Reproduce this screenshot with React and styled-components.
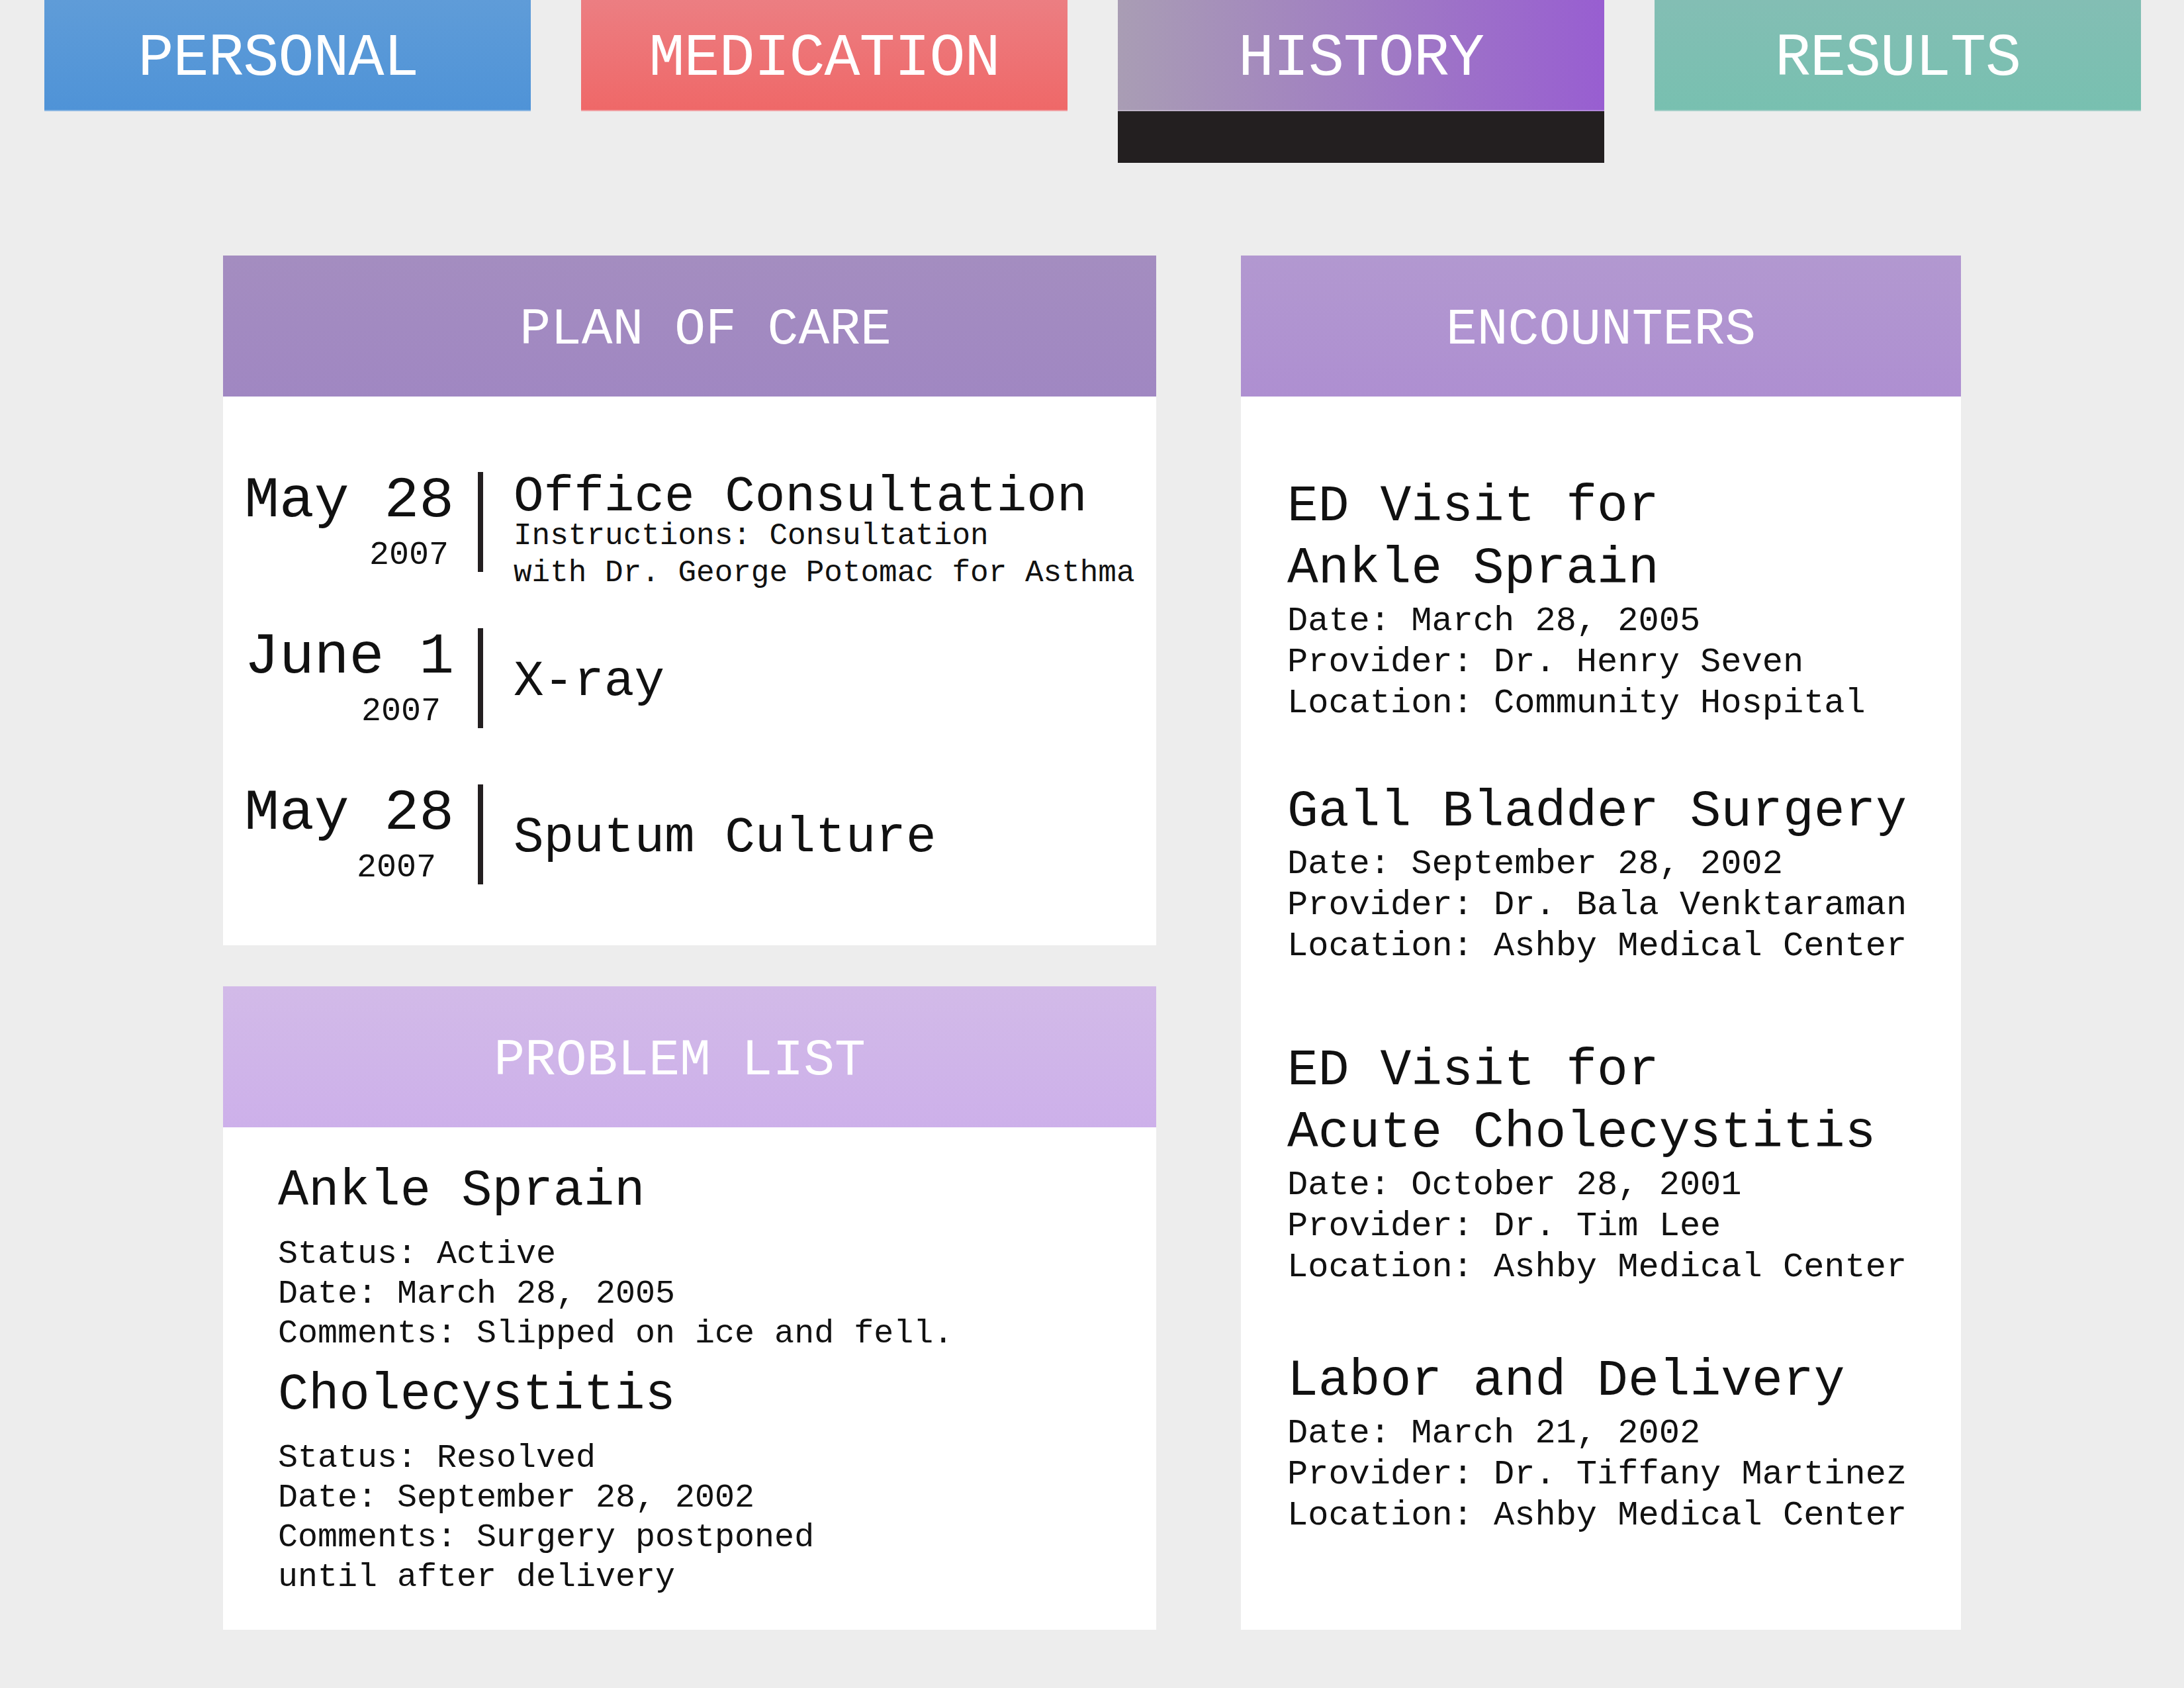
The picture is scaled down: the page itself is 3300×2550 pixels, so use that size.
import React from "react";
import styled, { createGlobalStyle, css } from "styled-components";

const tabs = [
  { name: "PERSONAL", tone: "personal", nudge: -14 },
  { name: "MEDICATION", tone: "medication", nudge: 0 },
  { name: "HISTORY", tone: "history", nudge: 0, active: true },
  { name: "RESULTS", tone: "results", nudge: 0 },
];

const planItems = [
  {
    day: "May 28",
    year: "2007",
    yearPad: 8,
    title: "Office Consultation",
    notes: ["Instructions: Consultation", "with Dr. George Potomac for Asthma"],
  },
  { day: "June 1", year: "2007", yearPad: 20, title: "X-ray" },
  { day: "May 28", year: "2007", yearPad: 27, title: "Sputum Culture" },
];

const problems = [
  {
    name: "Ankle Sprain",
    lines: ["Status: Active", "Date: March 28, 2005", "Comments: Slipped on ice and fell."],
  },
  {
    name: "Cholecystitis",
    lines: [
      "Status: Resolved",
      "Date: September 28, 2002",
      "Comments: Surgery postponed",
      "until after delivery",
    ],
  },
];

const encounters = [
  {
    title: ["ED Visit for", "Ankle Sprain"],
    lines: ["Date: March 28, 2005", "Provider: Dr. Henry Seven", "Location: Community Hospital"],
    space: 0,
  },
  {
    title: ["Gall Bladder Surgery"],
    lines: ["Date: September 28, 2002", "Provider: Dr. Bala Venktaraman", "Location: Ashby Medical Center"],
    space: 85,
  },
  {
    title: ["ED Visit for", "Acute Cholecystitis"],
    lines: ["Date: October 28, 2001", "Provider: Dr. Tim Lee", "Location: Ashby Medical Center"],
    space: 109,
  },
  {
    title: ["Labor and Delivery"],
    lines: ["Date: March 21, 2002", "Provider: Dr. Tiffany Martinez", "Location: Ashby Medical Center"],
    space: 93,
  },
];

const tabBackgrounds = {
  personal: "linear-gradient(180deg, #5f9cd8 0%, #4f93d7 100%)",
  medication: "linear-gradient(180deg, #ec7e82 0%, #ef6868 100%)",
  history: "linear-gradient(90deg, #a99db4 0%, #985ed1 100%)",
  results: "linear-gradient(180deg, #83beb4 0%, #78c0b0 100%)",
};

const headerBackgrounds = {
  plan: "linear-gradient(180deg, #a48dc0 0%, #a087c2 100%)",
  problem: "linear-gradient(180deg, #d2bae8 0%, #cdb0ea 100%)",
  encounters: "linear-gradient(180deg, #b298d0 0%, #ae8fd1 100%)",
};

const App = () => {
  return (
    <>
      <GlobalStyle />
      <Page>
        <TabBar>
          {tabs.map((tab) => (
            <TabItem key={tab.name}>
              <Tab $tone={tab.tone} $nudge={tab.nudge}>
                {tab.name}
              </Tab>
              {tab.active && <ActiveMark />}
            </TabItem>
          ))}
        </TabBar>

        <Columns>
          <LeftColumn>
            <Card>
              <CardHeader $tone="plan" $nudge={24}>
                PLAN OF CARE
              </CardHeader>
              <PlanBody>
                {planItems.map((item, i) => (
                  <PlanRow key={i}>
                    <DateCol>
                      <DateMain>{item.day}</DateMain>
                      <DateYear $pad={item.yearPad}>{item.year}</DateYear>
                    </DateCol>
                    <Divider />
                    <PlanContent $top={!!item.notes}>
                      <PlanTitle $tight={!!item.notes}>{item.title}</PlanTitle>
                      {item.notes && (
                        <PlanNotes>
                          {item.notes.map((n) => (
                            <div key={n}>{n}</div>
                          ))}
                        </PlanNotes>
                      )}
                    </PlanContent>
                  </PlanRow>
                ))}
              </PlanBody>
            </Card>

            <Card>
              <CardHeader $tone="problem" $nudge={-15}>
                PROBLEM LIST
              </CardHeader>
              <ProblemBody>
                {problems.map((p, i) => (
                  <Problem key={p.name} $first={i === 0}>
                    <ProblemName>{p.name}</ProblemName>
                    <Details $size={50} $line={60} $gap={19}>
                      {p.lines.map((l) => (
                        <div key={l}>{l}</div>
                      ))}
                    </Details>
                  </Problem>
                ))}
              </ProblemBody>
            </Card>
          </LeftColumn>

          <RightColumn>
            <Card $grow>
              <CardHeader $tone="encounters" $nudge={0}>
                ENCOUNTERS
              </CardHeader>
              <EncounterBody>
                {encounters.map((e, i) => (
                  <Encounter key={i} $space={e.space}>
                    <EncounterTitle>
                      {e.title.map((t) => (
                        <div key={t}>{t}</div>
                      ))}
                    </EncounterTitle>
                    <Details $size={52} $line={62} $gap={2}>
                      {e.lines.map((l) => (
                        <div key={l}>{l}</div>
                      ))}
                    </Details>
                  </Encounter>
                ))}
              </EncounterBody>
            </Card>
          </RightColumn>
        </Columns>
      </Page>
    </>
  );
};

export default App;

const GlobalStyle = createGlobalStyle`
  * {
    box-sizing: border-box;
  }
  body {
    margin: 0;
    background: #ededed;
    font-family: "Liberation Mono", "DejaVu Sans Mono", monospace;
    color: #111111;
  }
`;

const Page = styled.div`
  width: 3300px;
  min-height: 2550px;
  background: #ededed;
`;

const TabBar = styled.nav`
  display: grid;
  grid-template-columns: repeat(4, 735px);
  column-gap: 76px;
  align-items: start;
  padding: 0 65px 0 67px;
`;

const TabItem = styled.div`
  display: flex;
  flex-direction: column;
`;

const Tab = styled.div`
  height: 168px;
  display: flex;
  align-items: center;
  justify-content: center;
  padding-top: 12px;
  color: #ffffff;
  font-size: 90px;
  letter-spacing: -1px;
  background: ${({ $tone }) => tabBackgrounds[$tone]};
  border-bottom: 2px solid rgba(255, 255, 255, 0.25);
  ${({ $nudge }) =>
    $nudge < 0
      ? css`
          padding-right: ${-$nudge * 2}px;
        `
      : css`
          padding-left: ${$nudge * 2}px;
        `}
`;

const ActiveMark = styled.div`
  height: 78px;
  background: #231f20;
`;

const Columns = styled.main`
  display: flex;
  align-items: stretch;
  gap: 128px;
  margin-top: 140px;
  padding: 0 337px;
`;

const LeftColumn = styled.section`
  width: 1410px;
  display: flex;
  flex-direction: column;
  gap: 62px;
`;

const RightColumn = styled.section`
  width: 1088px;
  display: flex;
  flex-direction: column;
`;

const Card = styled.article`
  background: #ffffff;
  display: flex;
  flex-direction: column;
  ${({ $grow }) =>
    $grow &&
    css`
      flex: 1;
    `}
`;

const CardHeader = styled.h2`
  margin: 0;
  height: 213px;
  display: flex;
  align-items: center;
  justify-content: center;
  padding-top: 10px;
  color: #ffffff;
  font-weight: normal;
  font-size: 78px;
  background: ${({ $tone }) => headerBackgrounds[$tone]};
  ${({ $nudge }) =>
    $nudge < 0
      ? css`
          padding-right: ${-$nudge * 2}px;
        `
      : css`
          padding-left: ${$nudge * 2}px;
        `}
`;

const PlanBody = styled.div`
  padding: 114px 20px 92px 31px;
  display: flex;
  flex-direction: column;
  gap: 85px;
`;

const PlanRow = styled.div`
  display: flex;
  height: 151px;
`;

const DateCol = styled.div`
  width: 318px;
  flex-shrink: 0;
  display: flex;
  flex-direction: column;
  text-align: right;
  line-height: 1;
`;

const DateMain = styled.div`
  font-size: 88px;
  height: 88px;
`;

const DateYear = styled.div`
  font-size: 50px;
  margin-top: 13px;
  padding-right: ${({ $pad }) => $pad}px;
`;

const Divider = styled.div`
  width: 8px;
  flex-shrink: 0;
  background: #231f20;
  margin: 0 46px 0 36px;
`;

const PlanContent = styled.div`
  display: flex;
  flex-direction: column;
  justify-content: ${({ $top }) => ($top ? "flex-start" : "center")};
  padding-top: ${({ $top }) => ($top ? "8px" : "10px")};
`;

const PlanTitle = styled.div`
  font-size: 76px;
  line-height: ${({ $tight }) => ($tight ? "61px" : "66px")};
  white-space: nowrap;
`;

const PlanNotes = styled.div`
  font-size: 46px;
  line-height: 56px;
  white-space: nowrap;
`;

const ProblemBody = styled.div`
  padding: 51px 40px 49px 83px;
  display: flex;
  flex-direction: column;
`;

const Problem = styled.div`
  margin-top: ${({ $first }) => ($first ? "0" : "17px")};
`;

const ProblemName = styled.h3`
  margin: 0;
  font-weight: normal;
  font-size: 77px;
  line-height: 92px;
`;

const Details = styled.div`
  font-size: ${({ $size }) => $size}px;
  line-height: ${({ $line }) => $line}px;
  margin-top: ${({ $gap }) => $gap}px;
  white-space: nowrap;
`;

const EncounterBody = styled.div`
  flex: 1;
  padding: 119px 30px 0 70px;
  display: flex;
  flex-direction: column;
`;

const Encounter = styled.div`
  margin-top: ${({ $space }) => $space}px;
`;

const EncounterTitle = styled.h3`
  margin: 0;
  font-weight: normal;
  font-size: 78px;
  line-height: 94px;
  white-space: nowrap;
`;
